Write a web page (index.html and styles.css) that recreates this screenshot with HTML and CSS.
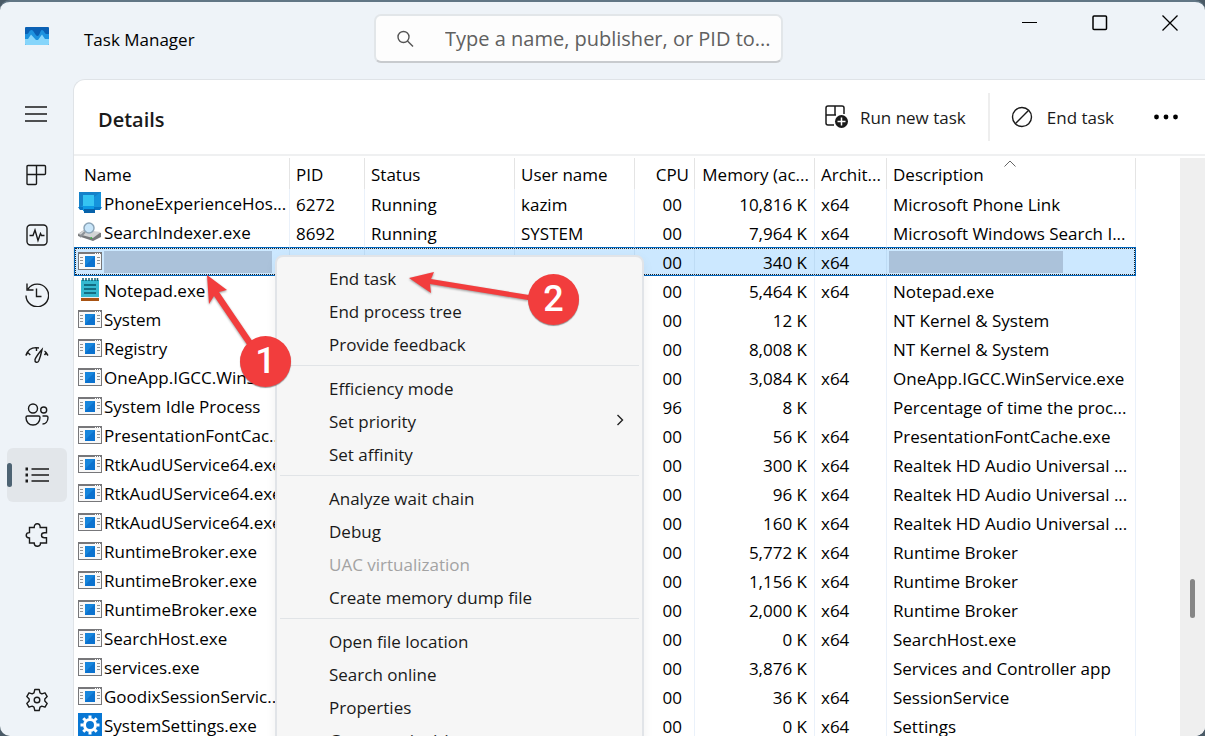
FILE: index.html
```
<!DOCTYPE html>
<html lang="en">
<head>
  <meta charset="UTF-8" />
  <meta name="viewport" content="width=device-width, initial-scale=1" />
  <title>Task Manager</title>
  <link rel="stylesheet" href="styles.css">
</head>
<body>
  <!-- Shared process icons -->
  <svg class="sprite" aria-hidden="true">
    <symbol id="exe" viewBox="0 0 24 18">
      <rect x="0.5" y="0.5" width="23" height="17" fill="#f8f8f8" stroke="#77777a"/>
      <path d="M0 1.5h24" stroke="#77777a"/>
      <path d="M17 1.5h1m1 0h1m1 0h1" stroke="#fff"/>
      <path d="M2 5.5h3M2 8.5h3M2 11.5h3M19 5.5h3M19 8.5h3M19 11.5h3" stroke="#929292"/>
      <rect x="7" y="4" width="10" height="11" fill="#0b72cf"/>
      <path d="M7 4h10L7 14z" fill="#1685dc"/>
    </symbol>
  </svg>

  <div class="window">
    <header class="titlebar">
      <svg class="app-icon" width="24" height="18" viewBox="0 0 24 18">
        <rect width="24" height="18" rx="1" fill="#0a60b4"/>
        <path d="M0 7h2c2 0 2-4 4.500-4S10 9 12.500 9 15 3 17 3s2.500 4 4.500 4H24v10H0z" fill="#1d92df"/>
        <path d="M0 12h3l3-4.500 5 5.500h2l4-5.500 3 4.500h4v5q0 1-1 1H1q-1 0-1-1z" fill="#86d5fb"/>
      </svg>
      <span class="app-name">Task Manager</span>
      <div class="search">
        <svg width="18" height="18" viewBox="0 0 18 18" fill="none" stroke="#555" stroke-width="1.4"><circle cx="7.500" cy="7" r="5.500"/><path d="M11.500 11l5.500 5.500"/></svg>
        <input type="text" aria-label="Search" placeholder="Type a name, publisher, or PID to...">
      </div>
      <div class="window-buttons">
        <button aria-label="Minimize"><svg width="16" height="16" viewBox="0 0 16 16"><path d="M0 7.500h15" stroke="#000"/></svg></button>
        <button aria-label="Maximize"><svg width="16" height="16" viewBox="0 0 16 16"><rect x="1" y="1" width="13.500" height="13.500" rx="1" fill="none" stroke="#000" stroke-width="1.500"/></svg></button>
        <button aria-label="Close"><svg width="16" height="16" viewBox="0 0 16 16"><path d="M.5.500l15 15M15.500.500l-15 15" stroke="#000" stroke-width="1.300"/></svg></button>
      </div>
    </header>

    <div class="content">
      <nav class="sidebar">
        <button aria-label="Open navigation"><svg viewBox="0 0 24 24"><path d="M0 4h22M0 11h22M0 18h22"/></svg></button>
        <button aria-label="Processes"><svg viewBox="0 0 24 24"><path d="M3 2.500h16.500q1 0 1 1v7q0 1-1 1H2V3.500q0-1 1-1zM11.500 2.500v18q0 1-1 1H3q-1 0-1-1v-9"/></svg></button>
        <button aria-label="Performance"><svg viewBox="0 0 24 24"><rect x="2" y="2" width="20" height="20" rx="3.500"/><path d="M4.500 12.500H8l2-5.500 3 10.500 2.500-7 1 2h3"/></svg></button>
        <button aria-label="App history"><svg viewBox="0 0 24 24"><path d="M1 12.500a11.300 11.300 0 1 0 2-6.500M2 .500V7h6.500M11.500 5.500v8h5"/></svg></button>
        <button aria-label="Startup apps"><svg viewBox="0 0 24 24"><path d="M.800 12.500C3 6.500 8 3.800 14 5M.800 12.500l2-3 2.500 2.500M11.500 4.500v3.500M17 6.500c-2 2-6.500 8-7 10-.500 3 2.500 4 3.800 1.300C15 15 16.500 9 17 6.500zM19.500 8c1.500 1 2.500 2.500 3.500 4.500M19.500 12l1.500-2 2 2.500"/></svg></button>
        <button aria-label="Users"><svg viewBox="0 0 24 24"><circle cx="8" cy="5.500" r="4.500"/><circle cx="18.700" cy="7" r="3"/><path d="M2.500 13h11q1.500 0 1.500 1.500c0 4.500-3 7.500-7 7.500s-7-3-7-7.500Q1 13 2.500 13zM17.500 13h4q1.500 0 1.500 1.500c0 4-2.500 6.500-5.500 6.500"/></svg></button>
        <button class="active" aria-label="Details"><svg viewBox="0 0 24 24"><path d="M6.500 6H24M6.500 12H24M6.500 18H24"/><path d="M.500 6h2.500M.500 12h2.500M.500 18h2.500" stroke-width="3"/></svg></button>
        <button aria-label="Services"><svg viewBox="0 0 24 24"><path d="M4.500 4.500h4.700c0-2.500 1.200-3.700 3-3.700s3 1.200 3 3.700h6.300v5.300h-2c-2.200 0-3 1-3 2.500s.800 2.500 3 2.500h2V20h-6c0 2-1.300 3.200-3.200 3.200S9.200 22 9.200 20H4.500v-5c-2.300 0-3.300-1-3.300-2.700s1-2.700 3.300-2.700z"/></svg></button>
        <button class="settings" aria-label="Settings"><svg viewBox="0 0 24 24"><circle cx="12" cy="12" r="2.800"/><path d="M9.800 1.500h4.400l.8 3.300 1.800 1 3.200-1 2.200 3.800-2.400 2.300v2.200l2.400 2.300-2.200 3.800-3.200-1-1.800 1-.8 3.300H9.800L9 19.200l-1.800-1-3.200 1-2.200-3.800 2.400-2.300v-2.200L1.800 8.600 4 4.800l3.200 1 1.800-1z" stroke-linejoin="round"/></svg></button>
      </nav>

      <main class="panel">
        <div class="toolbar">
          <h1>Details</h1>
          <button class="run"><svg width="24" height="24" viewBox="0 0 24 24" fill="none" stroke="#1a1a1a" stroke-width="1.500"><path d="M9 20H3q-2 0-2-2V3q0-2 2-2h14q2 0 2 2v6M10 1v9M1 10h10"/><circle cx="16.500" cy="16.500" r="6.500" fill="#1a1a1a" stroke="none"/><path d="M12.500 16.500h8M16.500 12.500v8" stroke="#fff"/></svg>Run new task</button>
          <button class="end"><svg width="22" height="22" viewBox="0 0 22 22" fill="none" stroke="#1a1a1a" stroke-width="1.400"><circle cx="11" cy="11" r="9.500"/><path d="M4.300 17.700L17.700 4.300"/></svg>End task</button>
          <button class="more" aria-label="See more"><svg width="24" height="6" viewBox="0 0 24 6"><circle cx="2.500" cy="3" r="2.400"/><circle cx="12" cy="3" r="2.400"/><circle cx="21.500" cy="3" r="2.400"/></svg></button>
        </div>

        <div class="list">
          <div class="table-wrap">
            <table>
              <colgroup>
                <col class="c-name"><col class="c-pid"><col class="c-status"><col class="c-user"><col class="c-cpu"><col class="c-mem"><col class="c-arch"><col class="c-desc">
              </colgroup>
              <thead>
                <tr><th>Name</th><th>PID</th><th>Status</th><th>User name</th><th class="num">CPU</th><th class="num">Memory (ac...</th><th>Archit...</th><th class="sorted">Description<svg class="sort" width="12" height="7" viewBox="0 0 12 7"><path d="M.500 6.500L6 1l5.500 5.500" fill="none" stroke="#666"/></svg></th></tr>
              </thead>
              <tbody>
                <tr>
                  <td><div class="proc"><svg width="24" height="24" viewBox="0 0 24 24"><path d="M1 1h22v17H1z" fill="#1593dc"/><path d="M1 1h22L1 17z" fill="#1582ca"/><path d="M0 16h24l-2 3H2z" fill="#0876c6"/><path d="M5 4h11v16l-5 2-6-2z" fill="#0d9ae5"/><path d="M5 4h11v11H5z" fill="#35c4f2"/><path d="M6 18h11v4H6z" fill="#0762aa"/></svg>PhoneExperienceHos...</div></td>
                  <td>6272</td><td>Running</td><td>kazim</td><td class="cpu">00</td><td class="num">10,816 K</td><td>x64</td><td>Microsoft Phone Link</td>
                </tr>
                <tr>
                  <td><div class="proc"><svg width="24" height="20" viewBox="0 0 24 20"><path d="M0 12l6-4 17 3v4l-8 4L0 14z" fill="#77797b"/><path d="M0 12l6-4 17 2-8 6z" fill="#d2d4d5"/><path d="M12 16l2-1v2l-2-1z" fill="#2dbf35"/><circle cx="11" cy="6" r="5" fill="#c9e6fa" stroke="#8ca5b8" stroke-width="1.500"/><path d="M7 10l-5 5" stroke="#8d9297" stroke-width="2"/></svg>SearchIndexer.exe</div></td>
                  <td>8692</td><td>Running</td><td>SYSTEM</td><td class="cpu">00</td><td class="num">7,964 K</td><td>x64</td><td>Microsoft Windows Search I...</td>
                </tr>
                <tr class="selected">
                  <td><div class="proc"><svg width="24" height="18"><use href="#exe"/></svg><span class="mask"></span></div></td>
                  <td></td><td></td><td></td><td class="cpu">00</td><td class="num">340 K</td><td>x64</td><td class="masked"><span class="mask"></span></td>
                </tr>
                <tr>
                  <td><div class="proc"><svg width="24" height="24" viewBox="0 0 24 24"><path d="M3 2h18v20H3z" fill="#35b9d0"/><path d="M3 20h18v3H3z" fill="#a85313"/><path d="M3 19.500h18" stroke="#eee"/><path d="M5 0v3M8 0v3M11 0v3M14 0v3M17 0v3M19.500 0v3" stroke="#126073" stroke-width="1.500"/><path d="M6 7h12M6 11h12M6 15h12" stroke="#126d82" stroke-width="2"/></svg>Notepad.exe</div></td>
                  <td></td><td></td><td></td><td class="cpu">00</td><td class="num">5,464 K</td><td>x64</td><td>Notepad.exe</td>
                </tr>
                <tr>
                  <td><div class="proc"><svg width="24" height="18"><use href="#exe"/></svg>System</div></td>
                  <td></td><td></td><td></td><td class="cpu">00</td><td class="num">12 K</td><td></td><td>NT Kernel &amp; System</td>
                </tr>
                <tr>
                  <td><div class="proc"><svg width="24" height="18"><use href="#exe"/></svg>Registry</div></td>
                  <td></td><td></td><td></td><td class="cpu">00</td><td class="num">8,008 K</td><td></td><td>NT Kernel &amp; System</td>
                </tr>
                <tr>
                  <td><div class="proc"><svg width="24" height="18"><use href="#exe"/></svg>OneApp.IGCC.WinSer...</div></td>
                  <td></td><td></td><td></td><td class="cpu">00</td><td class="num">3,084 K</td><td>x64</td><td>OneApp.IGCC.WinService.exe</td>
                </tr>
                <tr>
                  <td><div class="proc"><svg width="24" height="18"><use href="#exe"/></svg>System Idle Process</div></td>
                  <td></td><td></td><td></td><td class="cpu">96</td><td class="num">8 K</td><td></td><td>Percentage of time the proc...</td>
                </tr>
                <tr>
                  <td><div class="proc"><svg width="24" height="18"><use href="#exe"/></svg>PresentationFontCac...</div></td>
                  <td></td><td></td><td></td><td class="cpu">00</td><td class="num">56 K</td><td>x64</td><td>PresentationFontCache.exe</td>
                </tr>
                <tr>
                  <td><div class="proc"><svg width="24" height="18"><use href="#exe"/></svg>RtkAudUService64.exe</div></td>
                  <td></td><td></td><td></td><td class="cpu">00</td><td class="num">300 K</td><td>x64</td><td>Realtek HD Audio Universal ...</td>
                </tr>
                <tr>
                  <td><div class="proc"><svg width="24" height="18"><use href="#exe"/></svg>RtkAudUService64.exe</div></td>
                  <td></td><td></td><td></td><td class="cpu">00</td><td class="num">96 K</td><td>x64</td><td>Realtek HD Audio Universal ...</td>
                </tr>
                <tr>
                  <td><div class="proc"><svg width="24" height="18"><use href="#exe"/></svg>RtkAudUService64.exe</div></td>
                  <td></td><td></td><td></td><td class="cpu">00</td><td class="num">160 K</td><td>x64</td><td>Realtek HD Audio Universal ...</td>
                </tr>
                <tr>
                  <td><div class="proc"><svg width="24" height="18"><use href="#exe"/></svg>RuntimeBroker.exe</div></td>
                  <td></td><td></td><td></td><td class="cpu">00</td><td class="num">5,772 K</td><td>x64</td><td>Runtime Broker</td>
                </tr>
                <tr>
                  <td><div class="proc"><svg width="24" height="18"><use href="#exe"/></svg>RuntimeBroker.exe</div></td>
                  <td></td><td></td><td></td><td class="cpu">00</td><td class="num">1,156 K</td><td>x64</td><td>Runtime Broker</td>
                </tr>
                <tr>
                  <td><div class="proc"><svg width="24" height="18"><use href="#exe"/></svg>RuntimeBroker.exe</div></td>
                  <td></td><td></td><td></td><td class="cpu">00</td><td class="num">2,000 K</td><td>x64</td><td>Runtime Broker</td>
                </tr>
                <tr>
                  <td><div class="proc"><svg width="24" height="18"><use href="#exe"/></svg>SearchHost.exe</div></td>
                  <td></td><td></td><td></td><td class="cpu">00</td><td class="num">0 K</td><td>x64</td><td>SearchHost.exe</td>
                </tr>
                <tr>
                  <td><div class="proc"><svg width="24" height="18"><use href="#exe"/></svg>services.exe</div></td>
                  <td></td><td></td><td></td><td class="cpu">00</td><td class="num">3,876 K</td><td></td><td>Services and Controller app</td>
                </tr>
                <tr>
                  <td><div class="proc"><svg width="24" height="18"><use href="#exe"/></svg>GoodixSessionServic...</div></td>
                  <td></td><td></td><td></td><td class="cpu">00</td><td class="num">36 K</td><td>x64</td><td>SessionService</td>
                </tr>
                <tr>
                  <td><div class="proc"><svg width="24" height="24" viewBox="0 0 24 24"><path d="M0 0h24v24H0z" fill="#0877d4"/><circle cx="12" cy="12" r="5.500" fill="none" stroke="#fff" stroke-width="3"/><path d="M12 2.500v3M12 18.500v3M2.500 12h3M18.500 12h3M5.300 5.300l2 2M16.700 16.700l2 2M5.300 18.700l2-2M16.700 7.300l2-2" stroke="#fff" stroke-width="3"/></svg>SystemSettings.exe</div></td>
                  <td></td><td></td><td></td><td class="cpu">00</td><td class="num">0 K</td><td>x64</td><td>Settings</td>
                </tr>
              </tbody>
            </table>
          </div>
          <div class="scrollbar"><div class="thumb"></div></div>
        </div>
      </main>
    </div>
  </div>

  <!-- Context menu -->
  <div class="menu" role="menu">
    <button role="menuitem">End task</button>
    <button role="menuitem">End process tree</button>
    <button role="menuitem">Provide feedback</button>
    <hr>
    <button role="menuitem">Efficiency mode</button>
    <button role="menuitem">Set priority<svg width="8" height="16" viewBox="0 0 8 16"><path d="M1.500 1l5 5-5 5" fill="none" stroke="#222" stroke-width="1.400"/></svg></button>
    <button role="menuitem">Set affinity</button>
    <hr>
    <button role="menuitem">Analyze wait chain</button>
    <button role="menuitem">Debug</button>
    <button role="menuitem" disabled>UAC virtualization</button>
    <button role="menuitem">Create memory dump file</button>
    <hr>
    <button role="menuitem">Open file location</button>
    <button role="menuitem">Search online</button>
    <button role="menuitem">Properties</button>
    <button role="menuitem">Go to service(s)</button>
  </div>

  <!-- Numbered steps -->
  <svg class="arrows" width="400" height="140" viewBox="200 260 400 140" fill="#f23d3d">
    <path d="M207 275l20 15-8 2 36 53-5 4-36-53-5 8z"/>
    <path d="M409 278l25-6-3 7 98 16-1 5-98-16 1 9z"/>
  </svg>
  <span class="step step-1">1</span>
  <span class="step step-2">2</span>
</body>
</html>
```
FILE: styles.css
```
* {
  box-sizing: border-box;
}
body {
  margin: 0;
  height: 100vh;
  overflow: hidden;
  position: relative;
  background: #4a5a66;
  font-family: "Open Sans", "Noto Sans", sans-serif;
  font-size: 17px;
  color: #000;
}
button {
  border: none;
  background: none;
  padding: 0;
  font: inherit;
  color: #1a1a1a;
}
.sprite {
  display: none;
}
.window {
  height: 100vh;
  display: flex;
  flex-direction: column;
  background: #eef3f8;
  border-top: 2px solid #617685;
  border-radius: 10px;
  overflow: hidden;
}

/* Title bar */
.titlebar {
  flex: none;
  height: 77px;
  display: flex;
  padding-left: 25px;
}
.app-icon {
  margin-top: 25px;
}
.app-name {
  width: 290px;
  margin-left: 35px;
  line-height: 76px;
}
.search {
  width: 409px;
  height: 49px;
  margin-top: 12px;
  padding-left: 20px;
  display: flex;
  align-items: center;
  gap: 31px;
  background: #fdfdfd;
  border: 2px solid #e2e6e9;
  border-bottom-color: #c8cbce;
  border-radius: 7px;
}
.search svg {
  flex: none;
}
.search input {
  flex: 1;
  min-width: 0;
  border: none;
  outline: none;
  padding: 0;
  background: none;
  font: inherit;
  font-size: 20px;
}
.search input::placeholder {
  color: #606060;
  opacity: 1;
}
.window-buttons {
  margin-left: auto;
  display: flex;
}
.window-buttons button {
  width: 70px;
  height: 41px;
}
.window-buttons svg {
  display: block;
  margin: 0 auto;
}

/* Sidebar */
.content {
  flex: 1;
  min-height: 0;
  display: flex;
}
.sidebar {
  flex: none;
  width: 73px;
  padding: 9px 6px 9px 7px;
  display: flex;
  flex-direction: column;
  gap: 6px;
}
.sidebar button {
  height: 54px;
  border-radius: 6px;
}
.sidebar svg {
  display: block;
  width: 24px;
  height: 24px;
  margin: 0 auto;
  fill: none;
  stroke: #1a1a1a;
  stroke-width: 1.4px;
}
.sidebar .active {
  position: relative;
  background: #e2e6ea;
}
.sidebar .active::before {
  content: "";
  position: absolute;
  left: 0;
  top: 15px;
  width: 5px;
  height: 24px;
  border-radius: 3px;
  background: #4d6373;
}
.sidebar .settings {
  margin-top: auto;
}

/* Main panel */
.panel {
  flex: 1;
  min-width: 0;
  display: flex;
  flex-direction: column;
  background: #fff;
  border: 1px solid #dfe3e7;
  border-width: 1px 0 0 1px;
  border-top-left-radius: 12px;
}
.toolbar {
  flex: none;
  height: 76px;
  padding-right: 27px;
  display: flex;
  align-items: center;
  border-bottom: 2px solid #eff0f1;
}
.toolbar h1 {
  margin: 4px auto 0 24px;
  font-size: 20px;
  font-weight: 600;
  color: #1a1a1a;
}
.toolbar button {
  display: flex;
  align-items: center;
  height: 48px;
}
.toolbar .run {
  gap: 11px;
  padding-right: 22px;
  border-right: 2px solid #eeeeee;
}
.toolbar .end {
  gap: 14px;
  padding: 0 40px 0 21px;
}
.list {
  flex: 1;
  min-height: 0;
  display: flex;
  padding-top: 2px;
}
.table-wrap {
  flex: 1;
  min-width: 0;
  overflow: hidden;
}
.scrollbar {
  flex: none;
  width: 25px;
  background: #efefef;
}
.thumb {
  width: 5px;
  height: 39px;
  margin: 421px auto 0;
  border-radius: 3px;
  background: #868686;
}

table {
  width: 1062px;
  table-layout: fixed;
  border-collapse: separate;
  border-spacing: 0;
}
.c-name { width: 216px; }
.c-pid { width: 75px; }
.c-status { width: 150px; }
.c-user { width: 120px; }
.c-cpu { width: 60px; }
.c-mem { width: 120px; }
.c-arch { width: 72px; }
.c-desc { width: 249px; }
th,
td {
  padding: 0 0 0 6px;
  text-align: left;
  font-weight: normal;
  white-space: nowrap;
  overflow: hidden;
  border-right: 1px solid #eaf1fa;
}
th {
  height: 31px;
  padding-top: 2px;
  border-right-color: #e4e4e4;
}
th:first-child {
  padding-left: 10px;
}
td {
  height: 29px;
  line-height: 27px;
  padding-top: 1px;
}
td:first-child {
  padding: 0 0 0 4px;
}
.num {
  text-align: right;
  padding-left: 0;
  padding-right: 7px;
}
th.num {
  padding-right: 5px;
}
.cpu {
  text-align: right;
  padding-right: 12px;
}
.sorted {
  position: relative;
}
.sort {
  position: absolute;
  top: 2px;
  left: 117px;
}
.proc {
  display: flex;
  align-items: center;
  height: 29px;
  gap: 2px;
  line-height: 29px;
}
.proc svg {
  flex: none;
  margin-bottom: 2px;
}
.selected {
  outline: 1px dotted #222;
  outline-offset: -2px;
}
.selected td {
  background: #cce8ff;
  border-right-color: #bedcf5;
  border-top: 1px solid #0067c0;
  border-bottom: 1px solid #0067c0;
  line-height: 25px;
}
.selected td:first-child {
  border-left: 1px solid #0067c0;
  padding-left: 3px;
}
.selected td:last-child {
  border-right: 1px solid #0067c0;
}
.selected .proc {
  height: 27px;
}
.mask {
  display: block;
  width: 168px;
  height: 22px;
  background: #abc2da;
}
.masked {
  padding-left: 2px;
}
.masked .mask {
  width: 174px;
}

/* Context menu */
.menu {
  position: absolute;
  top: 255px;
  left: 275px;
  width: 369px;
  padding: 5px 3px;
  background: #f6f6f6;
  border: 2px solid #e1e4e8;
  border-radius: 8px;
  box-shadow: 0 4px 12px rgba(0,0,0,0.06);
}
.menu button {
  display: flex;
  align-items: center;
  justify-content: space-between;
  width: 100%;
  height: 33px;
  padding: 0 15px 0 49px;
}
.menu button:disabled {
  color: #a3a3a3;
}
.menu hr {
  height: 1px;
  margin: 4px 0 6px;
  border: none;
  background: #e1e4e7;
}

/* Steps */
.arrows {
  position: absolute;
  top: 260px;
  left: 200px;
  filter: drop-shadow(0 1px 1px rgba(0,0,0,0.4));
}
.step {
  position: absolute;
  width: 51px;
  height: 51px;
  border-radius: 50%;
  background: #f23d3d;
  color: #fff;
  font-family: Roboto, "Liberation Sans", sans-serif;
  font-size: 36px;
  font-weight: 500;
  line-height: 50px;
  text-align: center;
  box-shadow: 0 1px 1px rgba(0,0,0,0.4);
}
.step-1 {
  top: 336px;
  left: 240px;
}
.step-2 {
  top: 274px;
  left: 528px;
}
```
